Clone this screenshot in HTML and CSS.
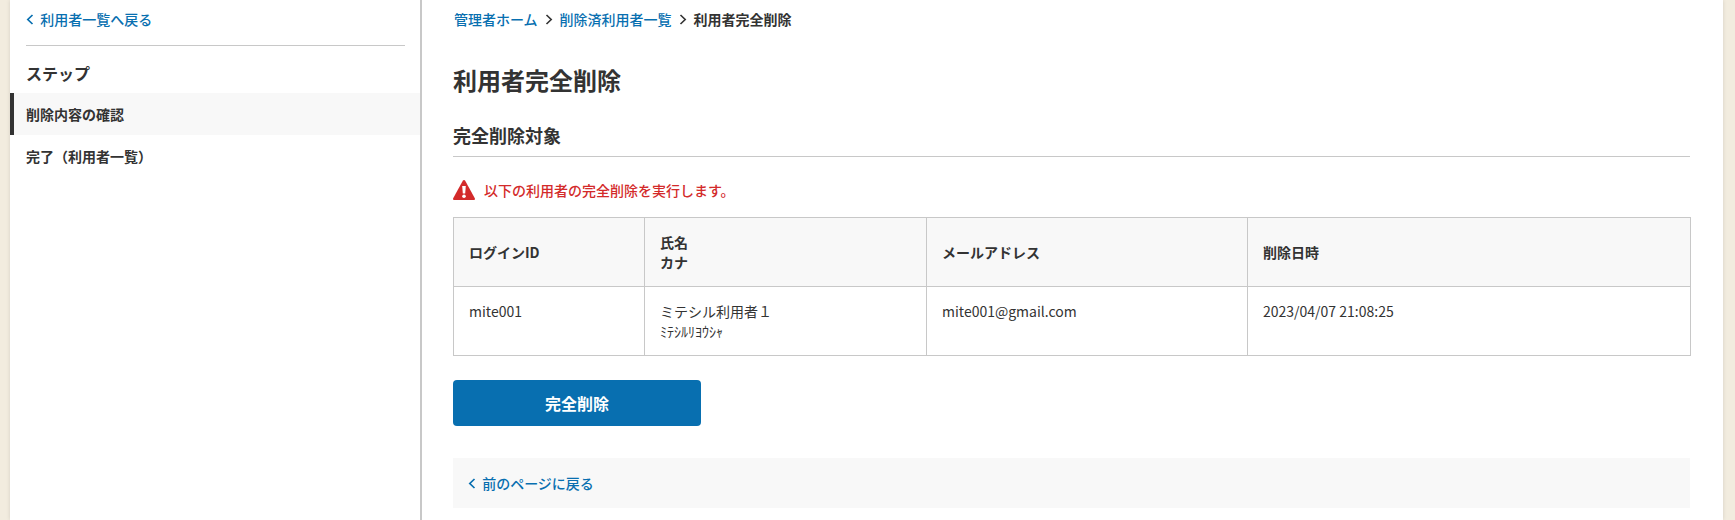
FILE: index.html
```html
<!DOCTYPE html>
<html lang="ja">
<head>
    <meta charset="UTF-8">
    <meta name="viewport" content="width=device-width, initial-scale=1.0">
    <title>利用者完全削除</title>
    <link rel="stylesheet" href="styles.css">
</head>
<body>
    <div class="sheet">
        <aside class="side">
            <a class="side-back" href="#">
                <svg class="chev" width="8" height="11" viewBox="0 0 8 11"><path d="M6.500 1 1.800 5.500l4.700 4.500" fill="none" stroke="currentColor" stroke-width="1.700"/></svg>
                利用者一覧へ戻る
            </a>
            <h2 class="side-title">ステップ</h2>
            <ul class="steps">
                <li class="step current">削除内容の確認</li>
                <li class="step">完了（利用者一覧）</li>
            </ul>
        </aside>
        <main class="main">
            <nav class="crumbs">
                <a href="#">管理者ホーム</a>
                <svg class="chev-r" width="8" height="11" viewBox="0 0 8 11"><path d="M1.500 1 6.200 5.500 1.500 10" fill="none" stroke="currentColor" stroke-width="1.600"/></svg>
                <a href="#">削除済利用者一覧</a>
                <svg class="chev-r" width="8" height="11" viewBox="0 0 8 11"><path d="M1.500 1 6.200 5.500 1.500 10" fill="none" stroke="currentColor" stroke-width="1.600"/></svg>
                <strong>利用者完全削除</strong>
            </nav>
            <h1 class="page-title">利用者完全削除</h1>
            <h2 class="section-title">完全削除対象</h2>
            <p class="warning">
                <svg width="22" height="20" viewBox="0 0 22 20"><path d="M11 0q.800 0 1.200.700L21.800 18.300q.700 1.700-1 1.700H1.200q-1.700 0-1-1.700L9.800.700Q10.200 0 11 0z" fill="#d32a2a"/><path d="M9.200 6h3.600l-.6 7.500H9.800z" fill="#fff"/><circle cx="11" cy="16.200" r="1.800" fill="#fff"/></svg>
                以下の利用者の完全削除を実行します。
            </p>
            <table class="target">
                <colgroup>
                    <col class="col-id">
                    <col class="col-name">
                    <col class="col-mail">
                    <col>
                </colgroup>
                <thead>
                    <tr>
                        <th>ログインID</th>
                        <th>氏名<br>カナ</th>
                        <th>メールアドレス</th>
                        <th>削除日時</th>
                    </tr>
                </thead>
                <tbody>
                    <tr>
                        <td>mite001</td>
                        <td>ミテシル利用者１<br><span class="kana">ﾐﾃｼﾙﾘﾖｳｼｬ</span></td>
                        <td>mite001@gmail.com</td>
                        <td>2023/04/07 21:08:25</td>
                    </tr>
                </tbody>
            </table>
            <button class="submit" type="button">完全削除</button>
            <div class="back-bar">
                <a href="#">
                    <svg class="chev" width="8" height="11" viewBox="0 0 8 11"><path d="M6.500 1 1.800 5.500l4.700 4.500" fill="none" stroke="currentColor" stroke-width="1.700"/></svg>
                    前のページに戻る
                </a>
            </div>
        </main>
    </div>
</body>
</html>
```

FILE: styles.css
```css
* {
    box-sizing: border-box;
}
html, body {
    height: 100%;
}
body {
    margin: 0;
    background: #f2ecdf;
    color: #333;
    font-family: "Noto Sans CJK JP", "Noto Sans", sans-serif;
    font-size: 14px;
    overflow: hidden;
}
a {
    color: #086fb0;
    font-weight: 500;
    text-decoration: none;
}
.sheet {
    display: flex;
    width: 1713px;
    height: 520px;
    margin-left: 10px;
    background: #fff;
    box-shadow: 0 0 4px rgba(0, 0, 0, 0.12);
}
.side {
    width: 412px;
    flex: none;
    border-right: 2px solid #c8c8c8;
}
.side-back {
    display: block;
    height: 46px;
    margin: 0 15px 0 16px;
    padding-top: 9px;
    line-height: 20px;
    border-bottom: 1px solid #c8c8c8;
}
.chev {
    margin-right: 3px;
}
.side-title {
    margin: 15px 0 8px 16px;
    font-size: 16px;
    line-height: 24px;
    font-weight: 700;
}
.steps {
    margin: 0;
    padding: 0;
    list-style: none;
}
.step {
    height: 42px;
    padding-left: 16px;
    line-height: 42px;
    font-weight: 700;
}
.step.current {
    padding-left: 12px;
    border-left: 4px solid #333;
    background: #f8f8f8;
}
.main {
    flex: 1;
    min-width: 0;
    padding: 9px 0 0 31px;
}
.crumbs {
    display: flex;
    align-items: center;
    height: 20px;
    padding-left: 1px;
}
.chev-r {
    margin: 0 7px 0 7px;
    color: #333;
}
.page-title {
    margin: 33px 0 0;
    font-size: 24px;
    line-height: 36px;
    font-weight: 700;
}
.section-title {
    width: 1237px;
    margin: 24px 0 0;
    padding-bottom: 7px;
    font-size: 18px;
    line-height: 27px;
    font-weight: 700;
    border-bottom: 1px solid #c8c8c8;
}
.warning {
    display: flex;
    align-items: center;
    gap: 9px;
    height: 20px;
    margin: 23px 0 17px;
    color: #d32a2a;
    font-weight: 500;
}
.target {
    width: 1238px;
    border-collapse: collapse;
    table-layout: fixed;
}
.col-id {
    width: 191px;
}
.col-name {
    width: 282px;
}
.col-mail {
    width: 321px;
}
.target th, .target td {
    border: 1px solid #c8c8c8;
    padding: 14px 15px;
    height: 69px;
    line-height: 20px;
    text-align: left;
    vertical-align: top;
}
.target th {
    background: #f8f8f8;
    font-weight: 700;
    vertical-align: middle;
}
.kana {
    font-size: 14px;
}
.submit {
    display: block;
    width: 248px;
    height: 46px;
    margin-top: 24px;
    border: none;
    border-radius: 4px;
    background: #086fb0;
    color: #fff;
    font-family: inherit;
    font-size: 16px;
    font-weight: 700;
}
.back-bar {
    width: 1237px;
    height: 50px;
    margin-top: 32px;
    padding-left: 15px;
    background: #f8f8f8;
    line-height: 50px;
}
```
